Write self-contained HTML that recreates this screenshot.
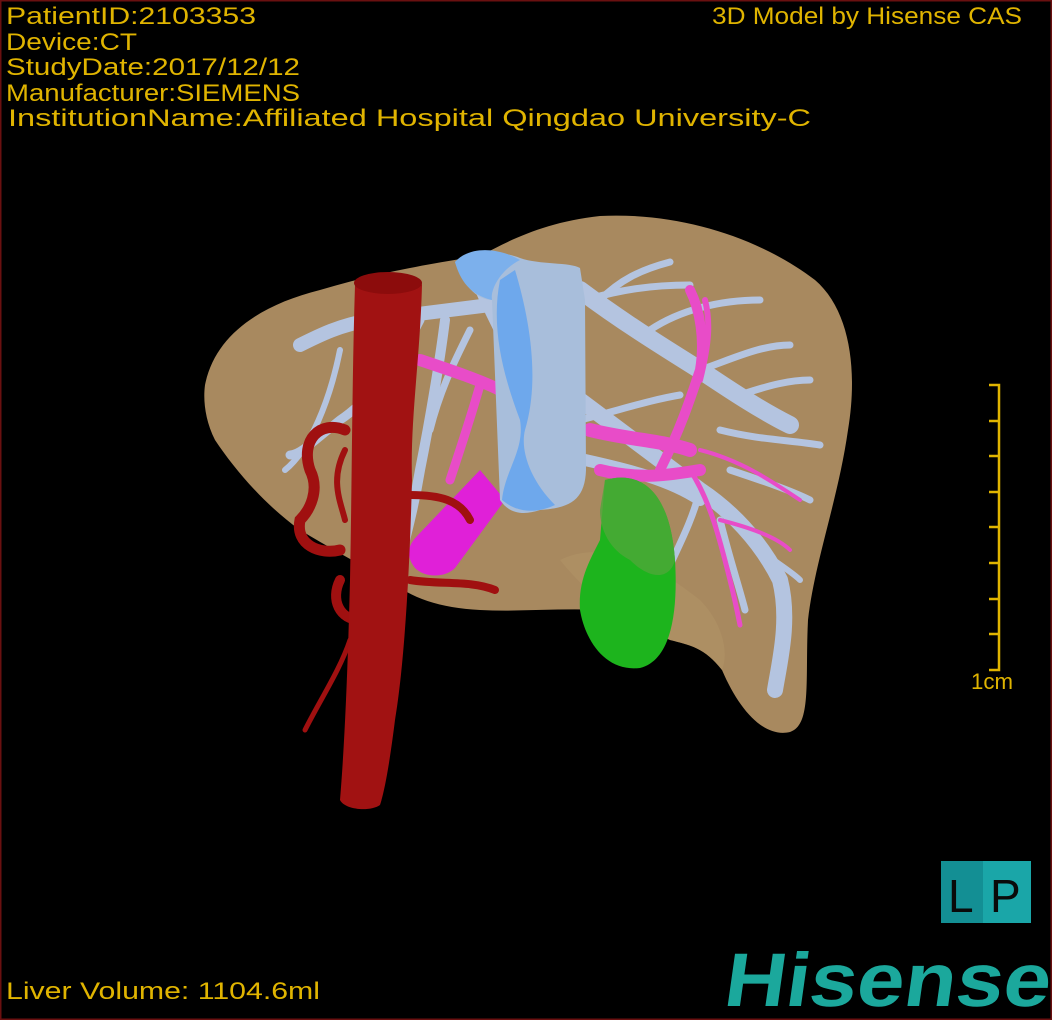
<!DOCTYPE html>
<html><head><meta charset="utf-8"><style>
html,body{margin:0;padding:0;background:#000;}
svg{display:block}
</style></head><body>
<svg width="1052" height="1020" viewBox="0 0 1052 1020" xmlns="http://www.w3.org/2000/svg">
<rect x="0" y="0" width="1052" height="1020" fill="#000"/>
<rect x="0.5" y="0.5" width="1051" height="1019" fill="none" stroke="#6a1010" stroke-width="2"/>
<path d="M205,385 C215,335 260,305 320,290 C380,272 440,262 480,256 C510,240 545,222 600,216 C680,212 760,238 815,280 C850,310 858,370 848,430 C838,500 815,560 808,620 C805,680 812,725 790,732 C765,738 740,712 722,670 C705,648 690,645 670,640 C640,625 620,612 600,610 C560,608 520,612 480,610 C440,608 410,598 390,580 C360,565 330,548 300,530 C265,505 235,470 215,440 C205,420 203,400 205,385 Z" fill="#a8895f"/>
<path d="M560,560 C600,540 650,560 700,600 C720,620 730,650 722,670 C705,648 690,645 670,640 C640,625 600,610 560,560Z" fill="#b09266" opacity="0.6"/>
<g stroke="#b4c4e0" fill="none" stroke-linecap="round">
<path d="M490,305 C450,310 410,315 370,320 C340,325 320,335 300,345" stroke-width="14"/>
<path d="M420,320 C400,360 370,400 340,420 C315,440 300,455 290,455" stroke-width="9"/>
<path d="M445,320 C440,360 430,420 420,470 C415,500 410,520 405,540" stroke-width="10"/>
<path d="M470,330 C455,360 440,390 430,430" stroke-width="7"/>
<path d="M340,350 C330,400 310,450 285,470" stroke-width="6"/>
<path d="M470,260 C480,290 490,310 500,330" stroke-width="12"/>
<path d="M580,290 C620,320 660,345 700,370 C730,390 760,410 790,425" stroke-width="18"/>
<path d="M600,300 C620,280 640,270 670,262" stroke-width="7"/>
<path d="M585,300 C620,290 650,285 690,285" stroke-width="7"/>
<path d="M650,330 C680,310 720,300 760,300" stroke-width="7"/>
<path d="M700,370 C730,360 760,345 790,345" stroke-width="7"/>
<path d="M740,395 C770,385 790,380 810,380" stroke-width="7"/>
<path d="M580,400 C620,430 660,460 700,490 C730,510 760,540 780,580 C790,620 780,660 775,690" stroke-width="16"/>
<path d="M585,460 C630,470 670,480 700,500" stroke-width="12"/>
<path d="M720,430 C760,440 790,440 820,445" stroke-width="7"/>
<path d="M730,470 C760,480 790,490 810,500" stroke-width="7"/>
<path d="M700,490 C690,530 670,560 660,590" stroke-width="7"/>
<path d="M720,520 C730,560 740,590 745,610" stroke-width="7"/>
<path d="M750,540 C770,560 790,570 800,580" stroke-width="6"/>
<path d="M580,420 C620,410 650,400 680,395" stroke-width="7"/>
</g>
<g stroke="#e84cc8" fill="none" stroke-linecap="round">
<path d="M420,360 C450,370 480,380 500,390" stroke-width="12"/>
<path d="M480,385 C470,420 460,450 450,480" stroke-width="9"/>
<path d="M590,430 C630,440 660,440 690,450" stroke-width="14"/>
<path d="M600,470 C640,480 670,475 700,470" stroke-width="12"/>
<path d="M660,470 C680,430 690,400 700,370 C705,340 700,310 690,290" stroke-width="10"/>
<path d="M700,380 C710,340 710,320 705,300" stroke-width="6"/>
<path d="M690,470 C710,500 720,540 730,580 C735,600 738,615 740,625" stroke-width="5"/>
<path d="M700,450 C740,460 770,480 800,500" stroke-width="4"/>
<path d="M720,520 C760,530 780,540 790,550" stroke-width="4"/>
</g>
<path d="M605,480 C640,470 670,490 675,560 C678,610 672,660 640,668 C605,672 585,640 580,610 C578,580 590,560 600,540 Z" fill="#1db41d"/>
<path d="M605,480 C640,470 670,490 675,560 C670,580 650,580 630,560 C610,550 600,530 600,510Z" fill="#4fa83a" opacity="0.8"/>
<path d="M480,470 L505,500 L455,568 C445,578 425,578 415,568 C405,555 408,545 418,535 Z" fill="#e020d8"/>
<path d="M455,262 C470,250 500,250 520,258 C540,265 570,262 580,268 L585,300 L586,470 C585,500 570,508 540,510 C525,515 510,515 500,500 L492,300 C480,300 465,290 455,262Z" fill="#a8bedb"/>
<path d="M515,270 C530,320 540,380 525,430 C520,450 530,480 555,505 C540,512 520,515 502,500 C505,470 525,450 520,420 C505,380 490,330 500,280 Z" fill="#6ea8ec"/>
<path d="M540,270 C555,330 545,390 548,420 C555,440 580,460 585,470 L585,300 Z" fill="#a8bedb"/>
<path d="M455,262 C470,245 500,248 520,260 C500,270 490,290 492,300 C470,295 460,280 455,262Z" fill="#7cb0ec"/>
<g stroke="#a01010" fill="none" stroke-linecap="round">
<path d="M345,430 C320,420 300,440 310,470 C320,490 310,510 300,520 C295,545 320,555 340,550" stroke-width="11"/>
<path d="M340,580 C330,600 340,620 360,620" stroke-width="10"/>
<path d="M410,495 C440,495 460,500 470,520" stroke-width="8"/>
<path d="M410,580 C440,585 470,580 495,590" stroke-width="8"/>
<path d="M350,640 C340,670 320,700 305,730" stroke-width="5"/>
<path d="M345,450 C330,480 340,500 345,520" stroke-width="6"/>
</g>
<path d="M355,285 C355,272 420,272 422,285 C420,360 410,420 412,480 C410,560 405,660 395,720 C390,760 385,790 380,805 C370,812 345,810 340,800 C345,740 348,660 350,580 C352,480 352,380 355,285Z" fill="#a11212"/>
<ellipse cx="388" cy="283" rx="34" ry="11" fill="#8c0c0c"/>
<g stroke="#e0b400" stroke-width="2.5" fill="none">
<path d="M989,385 H999 V670 H989"/>
<path d="M989,421 H999 M989,456 H999 M989,492 H999 M989,527 H999 M989,563 H999 M989,599 H999 M989,634 H999"/>
</g>
<g font-family="Liberation Sans, sans-serif" font-size="24" fill="#e0b400">
<text x="971" y="689" font-size="22" textLength="42" lengthAdjust="spacingAndGlyphs">1cm</text>
<text x="6" y="24" textLength="250" lengthAdjust="spacingAndGlyphs">PatientID:2103353</text>
<text x="6" y="50" textLength="131" lengthAdjust="spacingAndGlyphs">Device:CT</text>
<text x="6" y="75" textLength="294" lengthAdjust="spacingAndGlyphs">StudyDate:2017/12/12</text>
<text x="6" y="101" textLength="294" lengthAdjust="spacingAndGlyphs">Manufacturer:SIEMENS</text>
<text x="8" y="126" textLength="803" lengthAdjust="spacingAndGlyphs">InstitutionName:Affiliated Hospital Qingdao University-C</text>
<text x="712" y="24" textLength="310" lengthAdjust="spacingAndGlyphs">3D Model by Hisense CAS</text>
<text x="6" y="999" textLength="314" lengthAdjust="spacingAndGlyphs">Liver Volume: 1104.6ml</text>
</g>
<rect x="941" y="861" width="90" height="62" fill="#1aa6a8"/>
<rect x="941" y="861" width="42" height="62" fill="#138f94"/>
<g font-family="Liberation Sans, sans-serif" font-size="46" fill="#0a0a0a">
<text x="948" y="912">L</text>
<text x="990" y="912">P</text>
</g>
<text x="0" y="0" transform="translate(722,1006) skewX(-8)" font-family="Liberation Sans, sans-serif" font-weight="bold" font-size="76" fill="#1ba89c" textLength="326" lengthAdjust="spacingAndGlyphs">Hisense</text>
</svg>
</body></html>
